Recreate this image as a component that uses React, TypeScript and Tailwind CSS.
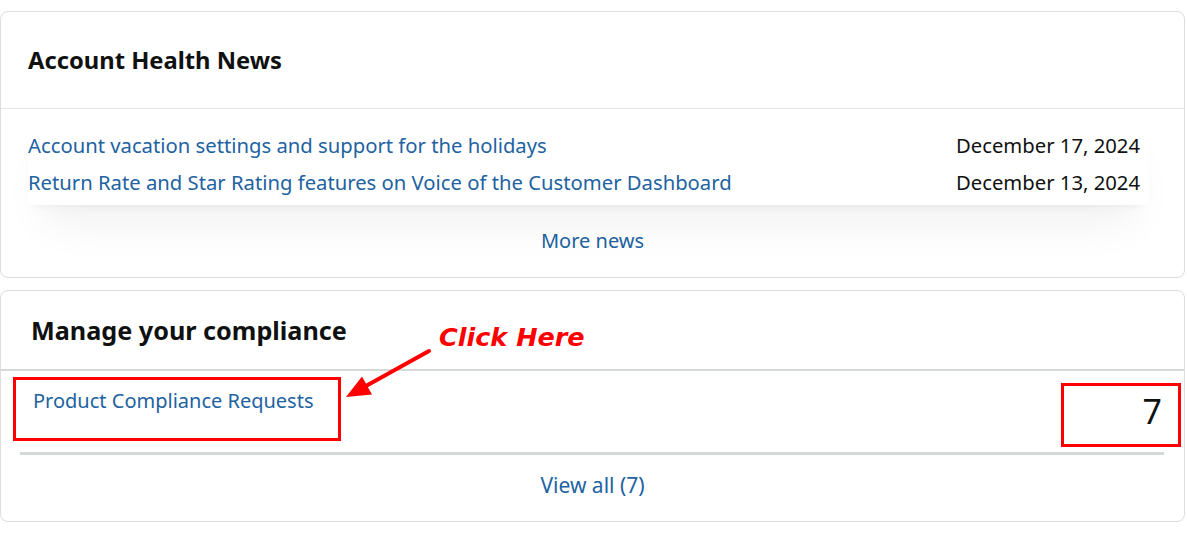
import React from "react";

const news = [
  { title: "Account vacation settings and support for the holidays", date: "December 17, 2024" },
  { title: "Return Rate and Star Rating features on Voice of the Customer Dashboard", date: "December 13, 2024" },
];

function ClickArrow() {
  return (
    <svg
      className="absolute left-[340px] top-[55px]"
      width="95"
      height="56"
      viewBox="0 0 95 56"
      fill="none"
    >
      <line x1="88" y1="5" x2="24" y2="40.5" stroke="#ff0000" strokeWidth="4" strokeLinecap="round" />
      <polygon points="5,51 31,48.5 21,30.5" fill="#ff0000" />
    </svg>
  );
}

export default function App() {
  return (
    <div className="min-h-[539px] bg-white pt-[11px] pr-[2px] font-['Noto_Sans',sans-serif] text-[#0f1111]">
      {/* Account Health News */}
      <section className="flex flex-col rounded-lg border border-[#dddddd] bg-white">
        <div className="flex h-[96px] items-center pl-[27px]">
          <h2 className="text-[23.75px] font-bold leading-[32px] text-[#0f1111]">Account Health News</h2>
        </div>
        <div className="h-px bg-[#e3e6e6]" />
        <div className="relative z-10 ml-[27px] mr-[35px] flex h-[96px] flex-col bg-white pt-[18px] pr-[9px] shadow-[0_6px_10px_-6px_rgba(0,0,0,0.07),0_34px_44px_-16px_rgba(0,0,0,0.06)]">
          {news.map((n) => (
            <div key={n.title} className="flex items-center justify-between text-[20.25px] leading-[37px]">
              <a className="text-[#2162a1]">{n.title}</a>
              <span className="text-[#0f1111]">{n.date}</span>
            </div>
          ))}
        </div>
        <div className="flex h-[72px] justify-center pt-[22px]">
          <a className="text-[20px] leading-[28px] text-[#2162a1]">More news</a>
        </div>
      </section>

      {/* Manage your compliance */}
      <section className="relative mt-[12px] flex flex-col rounded-lg border border-[#dddddd] bg-white">
        <div className="flex h-[78px] items-center pl-[30px]">
          <h2 className="text-[25.2px] font-bold leading-[32px] text-[#0f1111]">Manage your compliance</h2>
        </div>
        <div className="h-[2px] bg-[#d5d9d9]" />
        <div className="flex items-start justify-between">
          <div className="ml-[12px] mt-[6px] h-[64px] w-[328px] border-[3px] border-[#ff0000] pl-[17px] pt-[7px]">
            <a className="text-[20px] leading-[28px] text-[#2162a1]">Product Compliance Requests</a>
          </div>
          <div className="mr-[3px] mt-[12px] flex h-[64px] w-[120px] items-center justify-end border-[3px] border-[#ff0000] pr-[16px] pb-[8px]">
            <span className="text-[34px] leading-[34px] text-[#0f1111]">7</span>
          </div>
        </div>
        <div className="ml-[19px] mr-[20px] mt-[5px] h-[3px] bg-[#d5d9d9]" />
        <div className="flex h-[66px] justify-center pt-[16px]">
          <a className="text-[21px] leading-[28px] text-[#2162a1]">View all (7)</a>
        </div>

        {/* annotation */}
        <span className="absolute left-[438px] top-[34px] font-['DejaVu_Sans',sans-serif] text-[25.5px] font-bold italic leading-[25px] text-[#ff0000]">
          Click Here
        </span>
        <ClickArrow />
      </section>
    </div>
  );
}
